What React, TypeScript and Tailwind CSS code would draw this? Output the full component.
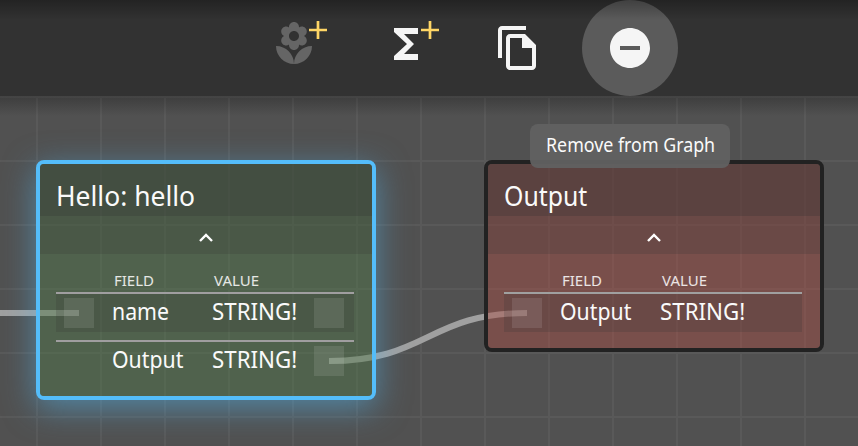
import type { ReactNode } from "react";

type Row = { name: string; value: string; input: boolean; output: boolean };

const helloRows: Row[] = [
  { name: "name", value: "STRING!", input: true, output: true },
  { name: "Output", value: "STRING!", input: false, output: true },
];
const outputRows: Row[] = [{ name: "Output", value: "STRING!", input: true, output: false }];

function ToolButton({ label, active, children }: { label: string; active?: boolean; children: ReactNode }) {
  return (
    <button aria-label={label} className={`size-24 rounded-full ${active ? "bg-[#5b5b5b]" : ""}`}>
      <svg className="block size-24" viewBox="0 0 96 96" fill="#f5f5f5">
        {children}
      </svg>
    </button>
  );
}

function Toolbar() {
  return (
    <header className="relative z-10 h-24 bg-[#323232]">
      <div className="flex h-24 gap-4 pl-[246px]">
        <ToolButton label="Add object">
          <path
            transform="translate(24 20) scale(2)"
            fill="#656565"
            d="M12 22c4.97 0 9-4.03 9-9-4.97 0-9 4.03-9 9zM5.6 10.25c0 1.38 1.12 2.5 2.5 2.5.53 0 1.01-.16 1.42-.44l-.02.19c0 1.38 1.12 2.5 2.5 2.5s2.5-1.12 2.5-2.5l-.02-.19c.4.28.89.44 1.42.44 1.38 0 2.5-1.12 2.5-2.5 0-1-.59-1.85-1.43-2.25.84-.4 1.43-1.25 1.43-2.25 0-1.38-1.12-2.5-2.5-2.5-.53 0-1.01.16-1.42.44l.02-.19C14.5 2.12 13.38 1 12 1S9.5 2.12 9.5 3.5l.02.19c-.4-.28-.89-.44-1.42-.44-1.38 0-2.5 1.12-2.5 2.5 0 1 .59 1.85 1.43 2.25-.84.4-1.43 1.25-1.43 2.25zM12 5.5c1.38 0 2.5 1.12 2.5 2.5s-1.12 2.5-2.5 2.5S9.5 9.38 9.5 8s1.12-2.5 2.5-2.5zM3 13c0 4.97 4.03 9 9 9 0-4.97-4.03-9-9-9z"
          />
          <path d="M63 30h18M72 21v18" stroke="#ffd666" strokeWidth="2.7" />
        </ToolButton>
        <ToolButton label="Add function">
          <path transform="translate(24 20) scale(2)" d="M18 4H6v2l6.5 6L6 18v2h12v-3h-7l5-5-5-5h7z" />
          <path d="M63 30h18M72 21v18" stroke="#ffd666" strokeWidth="2.7" />
        </ToolButton>
        <ToolButton label="Duplicate">
          <path
            transform="translate(24 24) scale(2)"
            d="M16 1H4c-1.1 0-2 .9-2 2v14h2V3h12V1zm-.5 4H8c-1.1 0-1.99.9-1.99 2L6 21c0 1.1.89 2 1.99 2H19c1.1 0 2-.9 2-2V10.5L15.500 5zM8 21V7h6v5h5v9H8z"
          />
        </ToolButton>
        <ToolButton label="Remove from Graph" active>
          <path
            transform="translate(24 24) scale(2)"
            d="M12 2C6.480 2 2 6.480 2 12s4.480 10 10 10 10-4.480 10-10S17.520 2 12 2zm5 11H7v-2h10v2z"
          />
        </ToolButton>
      </div>
      <div className="pointer-events-none absolute inset-x-0 top-0 h-5 bg-linear-to-b from-black/30 to-transparent" />
    </header>
  );
}

function Port({ on }: { on: boolean }) {
  return <div className={`size-[30px] ${on ? "bg-white/10" : ""}`} />;
}

function Condensed({ children, className = "" }: { children: ReactNode; className?: string }) {
  return <span className={`inline-block origin-left whitespace-nowrap ${className}`}>{children}</span>;
}

type NodeProps = { title: string; titleScale: string; rows: Row[]; frame: string; fill: string; line: string };

function GraphNode({ title, titleScale, rows, frame, fill, line }: NodeProps) {
  return (
    <section className={`absolute top-16 w-[340px] overflow-hidden rounded-lg border-4 ${frame}`}>
      <div className={`flex h-full flex-col ${fill}`}>
        <h2 className="h-[52px] bg-[#323232]/42 pl-4 text-[27px] leading-[64px]">
          <Condensed className={titleScale}>{title}</Condensed>
        </h2>
        <div className="flex h-[38px] items-center justify-center bg-[#323232]/20">
          <svg className="mt-1.5 h-3 w-4" viewBox="0 0 16 12" fill="none" stroke="#fff" strokeWidth="2.4">
            <path d="M2 9l6-6 6 6" />
          </svg>
        </div>
        <div className="flex w-[314px] flex-col pl-4">
          <div className="flex h-[38px] pl-[58px] pt-3.5 text-[15px] leading-6 text-white/85">
            <Condensed className="w-[100px]">FIELD</Condensed>
            <Condensed>VALUE</Condensed>
          </div>
          {rows.map((row, i) => (
            <div key={row.name} className={`mb-2 flex h-10 items-start border-t-2 pl-2 pt-1 ${line} ${i % 2 === 0 ? "bg-[#323232]/20 bg-clip-padding" : ""}`}>
              <Port on={row.input} />
              <div className="ml-[18px] w-[100px] text-[23px] leading-[26px]">
                <Condensed className="scale-x-[0.925]">{row.name}</Condensed>
              </div>
              <div className="w-[102px] text-[23px] leading-[26px]">
                <Condensed className="scale-x-[0.97]">{row.value}</Condensed>
              </div>
              <Port on={row.output} />
            </div>
          ))}
        </div>
      </div>
    </section>
  );
}

export default function App() {
  return (
    <div className="flex h-[446px] w-[858px] flex-col overflow-hidden bg-[#515151] font-['Noto_Sans',sans-serif] text-[#fafafa]">
      <Toolbar />
      <main className="relative h-[350px] bg-[linear-gradient(to_right,#595959_2px,transparent_2px),linear-gradient(to_bottom,#595959_2px,transparent_2px)] bg-size-[64px_64px] bg-position-[36px_0px]">
        <svg className="absolute inset-0 h-[350px] w-[858px]" viewBox="0 96 858 350" fill="none" stroke="#a0a0a0" strokeWidth="6">
          <path d="M0 313H79" />
          <path d="M329 361C428 361 428 313 527 313" />
        </svg>
        <GraphNode
          title="Hello: hello"
          titleScale="scale-x-[0.98]"
          rows={helloRows}
          frame="left-9 h-60 border-[#54bdfa] shadow-[0_8px_32px_#54bdfa80]"
          fill="bg-[#50784a]/45"
          line="border-[#a09ea0]"
        />
        <GraphNode
          title="Output"
          titleScale="scale-x-[0.92]"
          rows={outputRows}
          frame="left-[484px] h-48 border-[#222222]"
          fill="bg-[#aa4d44]/45"
          line="border-[#a0a0a0]"
        />
        <div className="pointer-events-none absolute inset-x-0 top-0 h-5 bg-linear-to-b from-black/25 to-transparent" />
        <div role="tooltip" className="absolute left-[530px] top-7 z-20 flex h-11 w-[200px] items-center rounded-lg bg-[#616161]/95 pb-0.5 pl-4 text-[19px]">
          <Condensed className="scale-x-[0.938]">Remove from Graph</Condensed>
        </div>
      </main>
    </div>
  );
}
